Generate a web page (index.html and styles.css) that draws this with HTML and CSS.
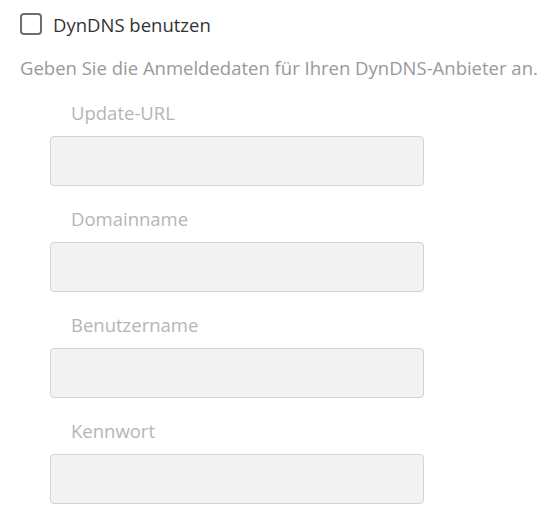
FILE: index.html
```html
<!DOCTYPE html>
<html lang="de">
<head>
<meta charset="utf-8">
<link rel="stylesheet" href="styles.css">
</head>
<body>
<div class="page">
  <label class="check">
    <span class="box"></span>
    <span class="check-text">DynDNS benutzen</span>
  </label>
  <p class="desc">Geben Sie die Anmeldedaten für Ihren DynDNS-Anbieter an.</p>
  <div class="fields">
    <div class="field">
      <div class="field-label">Update-URL</div>
      <div class="input"></div>
    </div>
    <div class="field">
      <div class="field-label">Domainname</div>
      <div class="input"></div>
    </div>
    <div class="field">
      <div class="field-label">Benutzername</div>
      <div class="input"></div>
    </div>
    <div class="field">
      <div class="field-label">Kennwort</div>
      <div class="input"></div>
    </div>
  </div>
</div>
</body>
</html>
```
FILE: styles.css
```css
html, body {
  margin: 0;
  padding: 0;
  background: #fff;
}
.page {
  font-family: "Open Sans", "Noto Sans", sans-serif;
  font-size: 18.5px;
  padding: 13px 0 0 20px;
}
.check {
  display: flex;
  align-items: center;
  height: 22px;
}
.box {
  width: 18px;
  height: 18px;
  border: 2px solid #6e6e6e;
  border-radius: 4px;
  box-sizing: content-box;
}
.check-text {
  margin-left: 11px;
  color: #333;
}
.desc {
  margin: 21px 0 0 0;
  color: #999;
  line-height: 24px;
  white-space: nowrap;
}
.fields {
  padding-left: 30px;
  display: flex;
  flex-direction: column;
}
.field-label {
  color: #b5b5b5;
  padding-left: 21px;
  line-height: 24px;
  margin-top: 21px;
}
.field:first-child .field-label {
  margin-top: 21px;
}
.input {
  margin-top: 11px;
  width: 372px;
  height: 48px;
  background: #f3f3f3;
  border: 1px solid #d3d3d3;
  border-radius: 4px;
}
```
